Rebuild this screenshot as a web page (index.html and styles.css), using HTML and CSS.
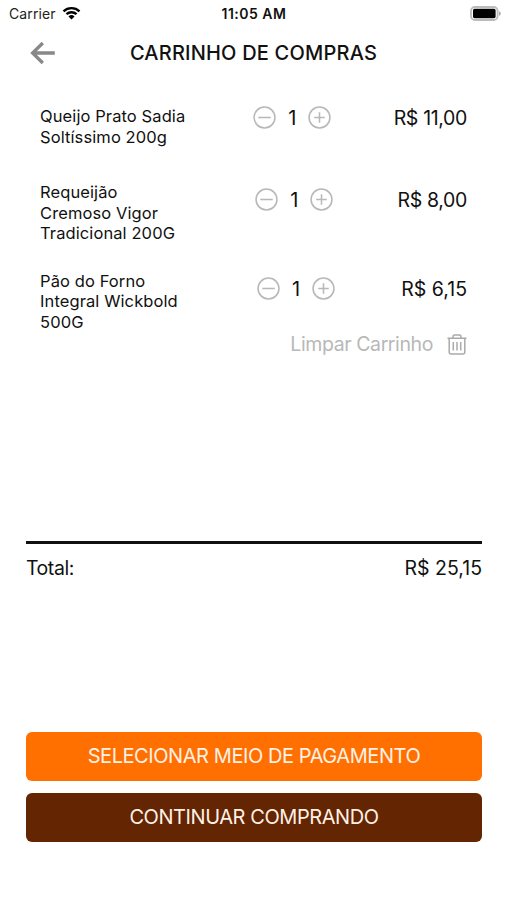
FILE: index.html
```html
<!DOCTYPE html>
<html lang="pt-BR">
<head>
<meta charset="utf-8">
<title>Carrinho de compras</title>
<link rel="stylesheet" href="styles.css">
</head>
<body>
<svg class="defs" width="0" height="0">
  <symbol id="minus" viewBox="0 0 24 24"><circle cx="12" cy="12" r="10.9"/><path d="M5.5 12h13"/></symbol>
  <symbol id="plus" viewBox="0 0 24 24"><circle cx="12" cy="12" r="10.9"/><path d="M6.5 12h11M12 6.5v11"/></symbol>
</svg>
<div class="screen">
  <div class="status">
    <div class="carrier"><span class="carrier-name">Carrier</span>
      <svg class="wifi" viewBox="0 0 20 14"><path d="M1.6 5.2C6.3.8 13.7.8 18.4 5.2M4.7 8.3c3-2.8 7.6-2.8 10.6 0" fill="none" stroke="#000" stroke-width="2.5"/><path d="M10 13.8 6.8 10.7a4.6 4.6 0 0 1 6.4 0z"/></svg>
    </div>
    <div class="time">11:05 AM</div>
    <div class="power"><svg class="battery" viewBox="0 0 31 16"><rect x="1" y="1" width="26.6" height="13" rx="4" fill="#fff" stroke="#bbb" stroke-width="1.8"/><rect x="3" y="2.8" width="22.6" height="9.4" rx="1.6"/><path d="M29 5.2c2.4.8 2.4 3.8 0 4.6z" fill="#aaa"/></svg></div>
  </div>
  <header class="header">
    <svg class="back" viewBox="0 0 26 24"><path d="M24.8 12H3M12.8 2 2.6 12l10.2 10"/></svg>
    <h1 class="title">CARRINHO DE COMPRAS</h1>
  </header>
  <main class="items">
    <div class="item item-short">
      <div class="name">Queijo Prato Sadia<br>Soltíssimo 200g</div>
      <div class="stepper"><svg class="step"><use href="#minus"/></svg><span class="qty">1</span><svg class="step"><use href="#plus"/></svg></div>
      <div class="price price-tight">R$ 11,00</div>
    </div>
    <div class="item">
      <div class="name">Requeijão<br>Cremoso Vigor<br>Tradicional 200G</div>
      <div class="stepper"><svg class="step"><use href="#minus"/></svg><span class="qty">1</span><svg class="step"><use href="#plus"/></svg></div>
      <div class="price price-tight">R$ 8,00</div>
    </div>
    <div class="item">
      <div class="name">Pão do Forno<br>Integral Wickbold<br>500G</div>
      <div class="stepper"><svg class="step"><use href="#minus"/></svg><span class="qty">1</span><svg class="step"><use href="#plus"/></svg></div>
      <div class="price">R$ 6,15</div>
    </div>
    <div class="clear"><span class="clear-label">Limpar Carrinho</span>
      <svg class="trash" viewBox="0 0 20 21"><path d="M.5 4.2h19M6 4V2.6Q6 1 7.6 1h4.8Q14 1 14 2.6V4M2.2 4.5V18q0 2 2 2h11.6q2 0 2-2V4.5M6.3 8v8.5M10 8v8.5M13.7 8v8.5"/></svg>
    </div>
  </main>
  <section class="total"><span class="total-label">Total:</span><span class="total-value">R$ 25,15</span></section>
  <footer class="actions">
    <button class="btn pay">SELECIONAR MEIO DE PAGAMENTO</button>
    <button class="btn more">CONTINUAR COMPRANDO</button>
  </footer>
</div>
</body>
</html>
```
FILE: styles.css
```css
* { box-sizing: border-box; }
body { margin: 0; background: #fff; color: #111; font-family: Inter, "Liberation Sans", sans-serif; }
.defs { position: absolute; }
svg { display: block; flex: none; }
.screen { height: 900px; display: flex; flex-direction: column; overflow: hidden; }
.status { height: 27px; padding: 0 6px 0 9px; display: grid; grid-template-columns: 1fr auto 1fr; align-items: center; white-space: nowrap; }
.carrier { display: flex; align-items: center; gap: 6px; font-size: 14px; letter-spacing: .1px; color: #222; }
.wifi { width: 19px; height: 14px; margin-top: -2px; }
.time { font-size: 14px; font-weight: 600; letter-spacing: .5px; position: relative; left: -1px; }
.power { display: flex; justify-content: flex-end; }
.battery { width: 31px; height: 16px; }
.header { height: 50px; padding: 1px 0 0 30px; display: grid; grid-template-columns: 26px 1fr 56px; align-items: center; }
.back { width: 26px; height: 24px; fill: none; stroke: #888; stroke-width: 3.3; }
.title { margin: 0; font-size: 20px; line-height: 24px; font-weight: 500; letter-spacing: .2px; text-align: center; white-space: nowrap; }
.items { height: 464px; padding: 29px 40px 0; }
.item { height: 62px; margin-bottom: 26.5px; display: flex; justify-content: space-between; align-items: flex-start; }
.item-short { height: 41px; margin-bottom: 35px; }
.name { width: 151px; font-size: 16.5px; line-height: 20.6px; letter-spacing: .1px; white-space: nowrap; }
.stepper { width: 78px; margin-top: 6px; display: flex; align-items: center; justify-content: space-between; }
.item-short .stepper, .item-short .price { margin-top: 0; }
.step { width: 23px; height: 23px; fill: none; stroke: #b8b8b8; stroke-width: 1.6; }
.qty { font-size: 20px; line-height: 23px; padding-top: 1px; margin-bottom: -1px; }
.price { margin-top: 6px; font-size: 19.5px; line-height: 24px; white-space: nowrap; }
.price-tight { letter-spacing: -.35px; }
.clear { margin-top: -27px; display: flex; align-items: center; justify-content: flex-end; gap: 14px; color: #b8b8b8; font-size: 19.5px; letter-spacing: -.4px; line-height: 24px; }
.trash { width: 20px; height: 21px; fill: none; stroke: #aaa; stroke-width: 1.5; }
.total { height: 191px; margin: 0 25px 0 26px; border-top: 3px solid #111; padding-top: 10px; display: flex; justify-content: space-between; font-size: 19.5px; line-height: 28px; }
.total-label { letter-spacing: -.45px; }
.actions { padding: 0 25px 0 26px; display: grid; gap: 12px; }
.btn { height: 49px; border: 0; border-radius: 6px; padding: 0; color: #fff1e6; font: 400 20px/49px Inter, "Liberation Sans", sans-serif; letter-spacing: -.43px; text-align: center; white-space: nowrap; }
.pay { background: #ff7000; }
.more { background: #632502; }
```
